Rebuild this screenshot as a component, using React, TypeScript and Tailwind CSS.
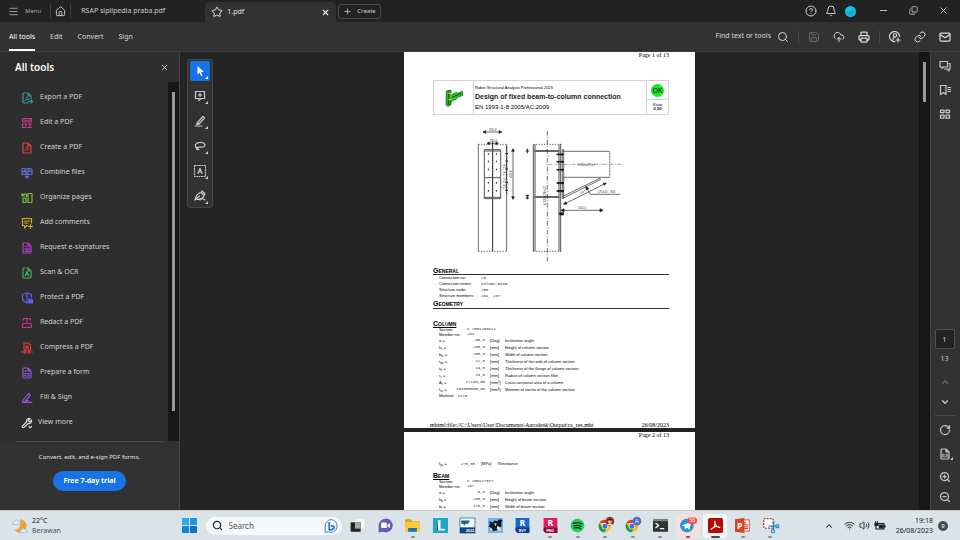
import type { ReactNode } from 'react'
import {
  Bell, ChevronDown, ChevronUp, CircleHelp, CloudUpload, House, Link, Mail, Menu, Minus,
  Plus, Printer, RotateCw, Save, Search, Star, X, ZoomIn, ZoomOut, Copy, Wifi, Volume2,
} from 'lucide-react'

interface IconProps {
  children: ReactNode
  className?: string
}

// 24 unit line icon, drawn in the current text colour
function Icon({ children, className = 'size-3' }: IconProps) {
  return (
    <svg
      viewBox="0 0 24 24"
      className={`shrink-0 ${className}`}
      fill="none"
      stroke="currentColor"
      strokeWidth="2.400"
      strokeLinecap="round"
      strokeLinejoin="round"
      aria-hidden="true"
    >
      {children}
    </svg>
  )
}

const pageOutline = <path d="M14 2H6a2 2 0 0 0-2 2v16a2 2 0 0 0 2 2h12a2 2 0 0 0 2-2V8zM14 2v6h6" />
const acrobatMark = <path d="M8 17c3-2 4-5 4-8 0 3 2 6 5 6-3-1-6 0-9 2z" strokeWidth="1.5" />

const tools = [
  {
    label: 'Export a PDF',
    color: 'text-[#2f969c]',
    icon: (
      <>
        <path d="M20 13V8l-6-6H6a2 2 0 0 0-2 2v16a2 2 0 0 0 2 2h8M14 2v6h6" />
        {acrobatMark}
        <path d="M14 19h8M20 16l3 3-3 3" />
      </>
    ),
  },
  {
    label: 'Edit a PDF',
    color: 'text-[#c4388f]',
    icon: (
      <>
        <rect x="3" y="3" width="18" height="7" rx="1" />
        <path d="M3 14h7v7H3zM14 14h7M17.500 14v7M14 21h7" />
        <path d="M6 6.500h12" />
      </>
    ),
  },
  {
    label: 'Create a PDF',
    color: 'text-[#d9423f]',
    icon: <>{pageOutline}{acrobatMark}</>,
  },
  {
    label: 'Combine files',
    color: 'text-[#6a69e0]',
    icon: (
      <>
        <path d="M10 15H2V3h8v12M14 15h8V6l-3-3h-5v12" />
        <path d="M5 11l2-5 1 4M17 6v3h3M12 12v10M9 19l3 3 3-3" />
      </>
    ),
  },
  {
    label: 'Organize pages',
    color: 'text-[#7bc03c]',
    icon: (
      <>
        <rect x="14" y="3" width="8" height="18" rx="1" />
        <path d="M10 12v9H4v-9zM2 3v5h5M2 8c2-4 5-5 9-4v5" />
      </>
    ),
  },
  {
    label: 'Add comments',
    color: 'text-[#d3aa1a]',
    icon: (
      <>
        <path d="M21 12V3H3v14h4v5l5-5h1M7 8h10M7 12h7M19 15v8M15 19h8" />
      </>
    ),
  },
  {
    label: 'Request e-signatures',
    color: 'text-[#b23ac6]',
    icon: <>{pageOutline}<path d="M8 9h3M8 13l3 3 3-4M8 19h9M16 12v5" /></>,
  },
  {
    label: 'Scan & OCR',
    color: 'text-[#43ad54]',
    icon: <>{pageOutline}<path d="M8.500 18l3.500-9 3.500 9M10 15h4" /></>,
  },
  {
    label: 'Protect a PDF',
    color: 'text-[#5f5fe6]',
    icon: (
      <>
        <path d="M21 10V5l-9-3-9 3v7c0 5 4 8 9 10M12 2v20" />
        <path d="M15 16h8v6h-8zM17 16v-2h4v2" fill="currentColor" />
      </>
    ),
  },
  {
    label: 'Redact a PDF',
    color: 'text-[#c4388f]',
    icon: (
      <>
        <path d="M5 6V3h14v3M12 3v8" />
        <rect x="3" y="13" width="18" height="8" rx="2" />
      </>
    ),
  },
  {
    label: 'Compress a PDF',
    color: 'text-[#df3d3d]',
    icon: (
      <>
        <path d="M14 2H6v14h13V6zM9.500 12l2.500-5 3 5zM1 20h22M8 17v6M16 17v6" />
      </>
    ),
  },
  {
    label: 'Prepare a form',
    color: 'text-[#8c57d2]',
    icon: <>{pageOutline}<path d="M8 8h3M8 13h8v5H8z" /></>,
  },
  {
    label: 'Fill & Sign',
    color: 'text-[#9153dc]',
    icon: <path d="M3 18L15 3l4 3L8 19l-5 2zM9 21c4-5 5-5 6-3s2 3 7 3H3" />,
  },
]

const quickTools = [
  { label: 'Select', icon: <path d="M7 2v17l4-4 3 7 3-1-3-7h6z" fill="currentColor" stroke="none" /> },
  { label: 'Comment', icon: <path d="M3 3h18v14h-7l-4 4v-4H3zM12 6.500v7M8.500 10h7" /> },
  { label: 'Highlight', icon: <path d="M7 15L18 3l3 3-11 12-5 1zM7 15l3 3M2 22h14" /> },
  { label: 'Draw', icon: <path d="M8 17C0 14 1 6 11 5s15 7 7 9c-5 1-9-1-12 1-3 3 1 5 4 4" /> },
  {
    label: 'Add text',
    icon: (
      <>
        <rect x="1" y="1" width="22" height="22" strokeDasharray="2 3" />
        <path d="M8 17l4-10 4 10M9.500 14h5" />
      </>
    ),
  },
  { label: 'Sign', icon: <path d="M2 20C3 12 7 7 14 5l6 6c-2 6-7 8-14 8M14 5l2-3 6 6-2 3M2 20l9-8M12 20c4-4 6-3 10 0" /> },
]

function TitleBar() {
  return (
    <header className="flex h-[22px] shrink-0 items-center bg-[#222222] text-[#cfcfcf]">
      <button className="flex h-full items-center gap-[6px] pl-2 text-[6px] text-[#a8a8a8]">
        <Menu className="size-[11px]" /> Menu
      </button>
      <div className="ml-[9px] flex h-[14px] w-[21px] items-center justify-center border-x border-[#444444]">
        <button aria-label="Home"><House className="size-[11px]" /></button>
      </div>
      <button className="ml-[10px] flex h-full w-[124px] items-center pt-px text-left text-[7px] text-[#c8c8c8]">RSAP sipilpedia praba.pdf</button>
      <div className="mt-[2px] flex h-5 w-[131px] items-center gap-1 rounded-t-sm bg-[#323232] px-[6px] text-[7px] text-[#e6e6e6]">
        <Star className="size-3" />
        <span className="flex-1">1.pdf</span>
        <button aria-label="Close tab"><X className="size-[9px]" strokeWidth={3} /></button>
      </div>
      <button className="ml-[2px] mt-px flex h-[15px] w-[43px] items-center gap-[5px] rounded-[3px] border border-[#4c4c4c] pl-1 text-[6px]">
        <Plus className="size-[9px]" /> Create
      </button>
      <div className="ml-auto flex items-center gap-2">
        <button aria-label="Help"><CircleHelp className="size-3" /></button>
        <button aria-label="Notifications"><Bell className="size-3" /></button>
        <button aria-label="Account" className="size-[11px] rounded-full bg-[#12c3ef]">
          <svg viewBox="0 0 11 11" className="size-[11px]" aria-hidden="true">
            <path d="M1 7 9 3q2 4-1 6-4 2-7-2z" fill="#25a3c9" />
          </svg>
        </button>
      </div>
      <div className="ml-[22px] flex items-center gap-5 pb-[2px] pr-[11px]">
        <button aria-label="Minimize"><Minus className="size-[11px]" /></button>
        <button aria-label="Restore"><Copy className="size-[9px] -scale-x-100 rotate-180" /></button>
        <button aria-label="Close"><X className="size-[11px]" /></button>
      </div>
    </header>
  )
}

function MenuBar() {
  return (
    <nav className="flex h-[30px] shrink-0 items-center border-b border-[#3d3d3d] bg-[#323232] text-[7px] text-[#d8d8d8]">
      <div className="flex h-full gap-[15px] pl-[9px]">
        <button className="border-b-2 border-white pt-[3px] text-white">All tools</button>
        <button className="pt-px">Edit</button>
        <button className="pt-px">Convert</button>
        <button className="pt-px">Sign</button>
      </div>
      <div className="ml-auto flex items-center pr-[9px]">
        <button className="flex items-center gap-[6px]">Find text or tools <Search className="size-3" /></button>
        <span className="mx-[9px] h-3 w-px bg-[#4a4a4a]" />
        <div className="flex items-center gap-[13px]">
          <button aria-label="Save" className="text-[#666666]"><Save className="size-3" /></button>
          <button aria-label="Upload"><CloudUpload className="size-3" /></button>
          <button aria-label="Print"><Printer className="size-3" strokeWidth={2.5} /></button>
        </div>
        <span className="mx-[9px] h-3 w-px bg-[#4a4a4a]" />
        <div className="flex items-center gap-[13px]">
          <button aria-label="Share with people">
            <Icon>
              <path d="M21 11a10 10 0 1 0-9 10M8 18v-3l3-3c-4-3-2-7 1-7s5 4 1 7M18 14v8M14 18h8" />
            </Icon>
          </button>
          <button aria-label="Copy link"><Link className="size-3" /></button>
          <button aria-label="Email"><Mail className="size-3" strokeWidth={2.5} /></button>
        </div>
      </div>
    </nav>
  )
}

function ToolsPanel() {
  return (
    <aside className="flex w-[180px] shrink-0 flex-col border-r border-[#454545] bg-[#323232] text-[#d2d2d2]">
      <div className="flex h-[30px] shrink-0 items-center justify-between bg-[#2e2e2e] pl-[15px] pr-[10px]">
        <h2 className="text-[10px] font-semibold text-white">All tools</h2>
        <button aria-label="Close panel"><X className="size-[9px]" strokeWidth={2.5} /></button>
      </div>
      <div className="flex h-[359px] shrink-0 bg-[#2e2e2e]">
        <div className="flex-1 pl-[21px] pt-[3px]">
          <ul className="text-[7px]">
            {tools.map((tool) => (
              <li key={tool.label}>
                <button className="flex h-[25px] items-center gap-[7px]">
                  <Icon className={`size-3 ${tool.color}`}>{tool.icon}</Icon>
                  {tool.label}
                </button>
              </li>
            ))}
            <li>
              <button className="flex h-[25px] items-center gap-[5px]">
                <Icon>
                  <path d="M3 18l8-8c-1-5 3-8 7-7l-4 4 3 3 4-4c1 5-2 8-7 7l-8 8c-2 1-5-1-3-3zM16 19l2.500 2.500L21 19" />
                </Icon>
                View more
              </button>
            </li>
          </ul>
        </div>
        <div className="flex w-[11px] justify-center bg-[#171717] pt-[10px]">
          <div className="h-[319px] w-[3px] bg-[#9a9a9a]" />
        </div>
      </div>
      <div className="flex flex-col items-center px-4">
        <hr className="w-full border-[#4b4b4b]" />
        <p className="mt-[11px] text-[6px] leading-[8px] text-[#e2e2e2]">Convert, edit, and e-sign PDF forms.</p>
        <button className="mt-[10px] h-5 rounded-full bg-[#1773e6] px-[10px] text-[7px] font-bold text-white">
          Free 7-day trial
        </button>
      </div>
    </aside>
  )
}

function QuickTools() {
  return (
    <div className="absolute left-[7px] top-[7px] flex w-[26px] flex-col items-center gap-[5px] rounded-[3px] border border-[#484848] bg-[#323232] py-px text-[#c8c8c8]">
      {quickTools.map((tool, i) => (
        <button
          key={tool.label}
          aria-label={tool.label}
          className={`relative flex size-5 items-center justify-center rounded-[2px] ${i === 0 ? 'bg-[#1672e8] text-white' : ''}`}
        >
          <Icon>{tool.icon}</Icon>
          <svg viewBox="0 0 4 4" className="absolute bottom-[2px] right-[2px] size-[3px]" aria-hidden="true">
            <path d="M4 0v4H0z" fill="currentColor" />
          </svg>
        </button>
      ))}
    </div>
  )
}

interface Param {
  symbol: string
  sub?: string
  value: string
  unit: string
  power?: string
  text: string
}

const columnParams: Param[] = [
  { symbol: 'α', value: '-90,0', unit: 'Deg', text: 'Inclination angle' },
  { symbol: 'h', sub: 'c', value: '250,0', unit: 'mm', text: 'Height of column section' },
  { symbol: 'b', sub: 'fc', value: '250,0', unit: 'mm', text: 'Width of column section' },
  { symbol: 't', sub: 'wc', value: '12,0', unit: 'mm', text: 'Thickness of the web of column section' },
  { symbol: 't', sub: 'fc', value: '19,0', unit: 'mm', text: 'Thickness of the flange of column section' },
  { symbol: 'r', sub: 'c', value: '13,0', unit: 'mm', text: 'Radius of column section fillet' },
  { symbol: 'A', sub: 'c', value: '17190,00', unit: 'mm', power: '2', text: 'Cross-sectional area of a column' },
  { symbol: 'I', sub: 'xc', value: '198000000,00', unit: 'mm', power: '4', text: 'Moment of inertia of the column section' },
]

const beamParams: Param[] = [
  { symbol: 'α', value: '0,0', unit: 'Deg', text: 'Inclination angle' },
  { symbol: 'h', sub: 'b', value: '250,0', unit: 'mm', text: 'Height of beam section' },
  { symbol: 'b', sub: 'f', value: '175,0', unit: 'mm', text: 'Width of beam section' },
]

const generalRows = [
  ['Connection no.:', '25'],
  ['Connection name:', 'Column-Beam'],
  ['Structure node:', '200'],
  ['Structure members:', '264, 167'],
]

const mono = "font-['Liberation_Mono',monospace] text-[#333333]"

function ParamTable({ rows }: { rows: Param[] }) {
  return (
    <table className="ml-[6px]">
      <tbody>
        {rows.map((row) => (
          <tr key={row.text} className="h-[7px] whitespace-nowrap leading-[7px]">
            <td className="w-[10px] p-0">
              {row.symbol}
              {row.sub && <sub className="text-[3px]">{row.sub}</sub>} =
            </td>
            <td className={`w-9 p-0 text-right ${mono}`}>{row.value}</td>
            <td className="w-5 p-0 pl-[5px]">
              [{row.unit}
              {row.power && <sup className="text-[3px]">{row.power}</sup>}]
            </td>
            <td className="p-0">{row.text}</td>
          </tr>
        ))}
      </tbody>
    </table>
  )
}

function MemberRows({ section, member }: { section: string; member: string }) {
  return (
    <dl className="ml-[6px] grid grid-cols-[28px_1fr] leading-[5px]">
      <dt>Section:</dt>
      <dd className={mono}>{section}</dd>
      <dt>Member no.:</dt>
      <dd className={mono}>{member}</dd>
    </dl>
  )
}

// Two elevations of the joint: end plate on the left, column with haunched beam on the right
function JointDrawing() {
  const bolts = [103, 125, 149, 189, 213]
  return (
    <svg viewBox="0 0 495 435" className="ml-8 h-[145px] w-[165px]" stroke="#222" strokeWidth="2" fill="none" role="img" aria-label="Connection drawing">
      {/* end plate view */}
      <path d="M40 73v321M125 73v321" />
      <path d="M40 73h85M40 394h85" strokeDasharray="4 4" />
      <path d="M83 65v329" strokeWidth="3" />
      <path d="M58 89h49v147H58zM58 93h49M58 173h49M58 232h49" stroke="#555" strokeWidth="3" />
      {bolts.map((y) => (
        <path key={y} d={`M70 ${y - 3}v5M94 ${y - 3}v5M121 ${y - 2}h8`} strokeWidth="3" />
      ))}
      <path d="M54 36h56M68 70h30M144 88v148M125 78v146" />
      <path d="M54 36l8-4v8zM110 36l-8-4v8zM66 70l7-4v8zM100 70l-7-4v8zM144 86l-4 8h8zM144 238l-4-8h8z" fill="#111" />

      {/* column */}
      <path d="M205 73v321M210 73v321M282 73v321M287 73v321" strokeWidth="3" stroke="#555" />
      <path d="M205 73h84M205 394h84" strokeDasharray="4 4" />
      <path d="M208 93h75M208 231h75" stroke="#666" strokeWidth="6" />
      <path d="M247 33v397" strokeDasharray="14 5 3 5" />

      {/* beam and haunch */}
      <path d="M292 89h4v146h-4z" />
      <path d="M294 94h140M294 172h140M434 94v78" />
      <path d="M434 94v78" stroke="#fff" strokeDasharray="4 5" />
      <path d="M294 229l112-55M296 234l112-56" />
      <path d="M250 133h224" strokeDasharray="12 4 3 4" stroke="#777" />
      {bolts.map((y) => (
        <path key={y} d={`M275 ${y}h22M280 ${y - 3}v7M291 ${y - 3}v7`} strokeWidth="4" stroke="#111" />
      ))}
      <path d="M281 282h16M288 271h126M298 252l124-62M364 202l12 21h90" />
      <path d="M288 271l9-5v10zM414 271l-9-5v10zM296 253l10-1-5-7zM424 189l-6 7-4-6zM362 199l2 11 7-4zM284 278h12v7h-12z" fill="#111" />
      <path d="M187 86v14M182 93h10M187 224v14M182 227h10M182 234h10" strokeWidth="3" />
      <g fill="#333" stroke="none" className="font-['Liberation_Sans',sans-serif] text-[9px]">
        <text x="72" y="32">250,0</text>
        <text x="74" y="65">130,0</text>
        <text x="340" y="267">300,0</text>
        <text x="338" y="138">K 250x175x7</text>
        <text x="398" y="219">175x10 - 306</text>
        <text transform="translate(140 173) rotate(-90)">420,0</text>
        <text transform="translate(122 210) rotate(-90)">75,0 75,0 75,0 75,0</text>
        <text transform="translate(243 256) rotate(-90)">K 250x250x12</text>
        <text transform="translate(348 222) rotate(-27)">337</text>
      </g>
    </svg>
  )
}

const sectionHead = 'text-[7px] font-bold [font-variant:small-caps]'
const serifLine = "text-[6px] leading-[6px] font-['Liberation_Serif',serif]"

function PageOne() {
  return (
    <article className="flex h-[376px] w-[291px] shrink-0 flex-col bg-white px-[26px] text-[4px] text-black font-['Liberation_Sans',sans-serif]">
      <p className={`text-right ${serifLine}`}>Page 1 of 13</p>
      <div className="flex-1 pl-[3px]">
        <div className="mt-[22px] flex h-[35px] border border-[#d4d4d4]">
          <div className="flex w-10 items-center justify-center border-r border-[#d4d4d4]">
            <svg viewBox="0 0 54 54" className="size-[18px]" aria-hidden="true">
              <path d="M4 6l14-3v44l-10 5-5-5z" fill="#17b42b" stroke="#124d17" strokeWidth="2" />
              <path d="M18 18l16-8 4 3 14-6 2 12-14 5-8 8-8 2-6 5z" fill="#1fca35" stroke="#124d17" strokeWidth="2" />
              <path d="M18 26l30-12M11 5v44" stroke="#0b5c18" strokeWidth="3" />
              <path d="M8 13h12M8 32h12M18 12v22" stroke="#d9d72b" strokeWidth="3" />
            </svg>
          </div>
          <div className="flex-1 pl-px pt-1">
            <p className="text-[4px] leading-[6px]">Robot Structural Analysis Professional 2023</p>
            <h1 className="text-[7px] font-bold leading-[12px] text-[#222222]">Design of fixed beam-to-column connection</h1>
            <p className="text-[6px] leading-[9px]">EN 1993-1-8:2005/AC:2009</p>
          </div>
          <div className="w-[22px] border-l border-[#d4d4d4] text-center">
            <div className="flex h-[19px] items-center justify-center border-b border-[#d4d4d4]">
              <span className="size-[13px] rounded-full bg-[#19e629] text-[7px] leading-[13px]">OK</span>
            </div>
            <p className="pt-[2px] leading-[5px]">Ratio</p>
            <p className="font-bold leading-[4px]">0,50</p>
          </div>
        </div>
        <div className="mt-[5px]">
          <JointDrawing />
        </div>
        <h2 className={`mt-[2px] border-b border-[#333333] leading-[7px] ${sectionHead}`}>General</h2>
        <dl className="ml-[6px] grid grid-cols-[42px_1fr] leading-[6px]">
          {generalRows.map(([name, value]) => (
            <div key={name} className="contents">
              <dt>{name}</dt>
              <dd className={mono}>{value}</dd>
            </div>
          ))}
        </dl>
        <h2 className={`mt-px border-b border-[#333333] leading-[8px] ${sectionHead}`}>Geometry</h2>
        <h3 className={`mt-3 leading-[6px] underline ${sectionHead}`}>Column</h3>
        <MemberRows section="K 250x250x12" member="264" />
        <ParamTable rows={columnParams} />
        <p className="ml-[6px] leading-[5px]">
          Material: <span className={`ml-[2px] ${mono}`}>S275</span>
        </p>
      </div>
      <footer className={`flex justify-between ${serifLine}`}>
        <span>mhtml:file://C:\Users\User\Documents\Autodesk\Output\ra_res.mht</span>
        <span>26/08/2023</span>
      </footer>
    </article>
  )
}

function PageTwo() {
  return (
    <article className="h-[376px] w-[291px] shrink-0 bg-white px-[26px] text-[4px] text-black font-['Liberation_Sans',sans-serif]">
      <p className={`text-right ${serifLine}`}>Page 2 of 13</p>
      <div className="pl-[3px] pt-[22px]">
        <p className="ml-[6px] flex leading-[8px]">
          <span className="w-[15px]">f<sub className="text-[3px]">yc</sub> =</span>
          <span className={`w-[21px] text-right ${mono}`}>275,00</span>
          <span className="w-[23px] pl-[6px]">[MPa]</span>
          <span>Resistance</span>
        </p>
        <h3 className={`mt-[5px] leading-[6px] underline ${sectionHead}`}>Beam</h3>
        <MemberRows section="K 250x175x7" member="167" />
        <ParamTable rows={beamParams} />
      </div>
    </article>
  )
}

function PageRail() {
  return (
    <aside className="flex w-[30px] shrink-0 flex-col items-center border-l border-[#454545] bg-[#323232] pr-[2px] text-[#c8c8c8]">
      <div className="mt-2 flex flex-col gap-3">
        <button aria-label="Comments">
          <Icon><path d="M2 3h15v11H9l-3 3v-3H2zM20 7h2v11h-2v4l-4-4h-5" /></Icon>
        </button>
        <button aria-label="Bookmarks">
          <Icon><path d="M3 3h11v18l-5-4-6 4zM18 7h5M18 11h5M18 15h5" /></Icon>
        </button>
        <button aria-label="Page thumbnails">
          <Icon><path d="M3 4h7v5H3zM14 4h7v5h-7zM3 14h7v6H3zM14 14h7v6h-7z" strokeWidth="2.500" /></Icon>
        </button>
      </div>
      <div className="mt-auto flex flex-col items-center pb-[7px]">
        <input
          aria-label="Page number"
          defaultValue="1"
          className="size-5 rounded-[2px] border border-[#515151] bg-[#222222] text-center text-[7px] text-[#dddddd]"
        />
        <span className="mt-[5px] text-[7px] leading-[10px]">13</span>
        <button aria-label="Previous page" className="mt-[13px] text-[#6c6c6c]"><ChevronUp className="size-[10px]" strokeWidth={3} /></button>
        <button aria-label="Next page" className="mt-[10px]"><ChevronDown className="size-[10px]" strokeWidth={3} /></button>
        <hr className="mt-2 w-5 border-[#4b4b4b]" />
        <button aria-label="Rotate" className="mt-2"><RotateCw className="size-3" strokeWidth={2.5} /></button>
        <button aria-label="Page display" className="relative mt-3">
          <Icon>{pageOutline}<path d="M8 12v6M16 12v6M12 13v1M12 17v1" /></Icon>
          <svg viewBox="0 0 4 4" className="absolute -right-[2px] bottom-0 size-[3px]" aria-hidden="true">
            <path d="M4 0v4H0z" fill="currentColor" />
          </svg>
        </button>
        <button aria-label="Zoom in" className="mt-[11px]"><ZoomIn className="size-3" strokeWidth={2.5} /></button>
        <button aria-label="Zoom out" className="mt-2"><ZoomOut className="size-3" strokeWidth={2.5} /></button>
      </div>
    </aside>
  )
}

function ChromeLogo({ badge }: { badge: ReactNode }) {
  return (
    <>
      <circle cx="11" cy="13" r="10" fill="#fbc116" />
      <path d="M2.300 8A10 10 0 0 1 19.700 8H11z" fill="#e33b2e" />
      <path d="M2.300 8A10 10 0 0 0 10 23l5-8H7z" fill="#229a4b" />
      <circle cx="11" cy="13" r="5" fill="#fff" />
      <circle cx="11" cy="13" r="4" fill="#3478e5" />
      {badge}
    </>
  )
}

interface TaskApp {
  name: string
  state?: 'running' | 'active' | 'alert'
  icon: ReactNode
}

const label = "font-['Noto_Sans',sans-serif] font-bold"

const apps: TaskApp[] = [
  {
    name: 'Task view',
    icon: (
      <>
        <rect x="8" y="2" width="15" height="15" fill="#f7f8f8" />
        <rect x="1" y="7" width="16" height="15" fill="#222" />
        <rect x="8" y="7" width="9" height="10" fill="#aaa" />
      </>
    ),
  },
  {
    name: 'Chat',
    icon: (
      <>
        <path d="M12 1a11 11 0 1 1-4 21l-7 1V12A11 11 0 0 1 12 1z" fill="#6659b8" />
        <rect x="5" y="7" width="9" height="9" rx="1" fill="#fff" />
        <path d="M15 11l4-3v8l-4-3z" fill="#fff" />
      </>
    ),
  },
  {
    name: 'File Explorer',
    state: 'running',
    icon: (
      <>
        <path d="M0 2h9l3 3h12v7H0z" fill="#e49b1b" />
        <rect x="0" y="6" width="24" height="16" rx="1" fill="#fcc93f" />
        <path d="M5 16h14v6H5z" fill="#1872bd" />
      </>
    ),
  },
  {
    name: 'L',
    icon: (
      <>
        <rect width="24" height="24" fill="#21a5cb" />
        <path d="M8 4l4-1v14h7v3H7z" fill="#fff" />
        <path d="M8 4v16H6z" fill="#134a6b" />
      </>
    ),
  },
  {
    name: 'Structural 2022',
    icon: (
      <>
        <rect width="24" height="24" fill="#f1f6fa" stroke="#0b4a78" strokeWidth="1" />
        <path d="M0 15h24v9H0z" fill="#0b4a78" />
        <path d="M2 4h14l-3 5H9l-2 3-2-3H2z" fill="#19628f" />
        <text x="9" y="22" fill="#fff" className={`${label} text-[6px]`}>2022</text>
      </>
    ),
  },
  {
    name: 'Drawing editor',
    icon: (
      <>
        <rect width="24" height="24" fill="#6eb8ea" />
        <path d="M2 5l6 2 2-3 5 1 3-3 5 1-2 6 1 4-5 2-3 5-6 1-2-5-5-2 2-4z" fill="#131a20" />
        <path d="M10 8l4 1-2 4zM15 12l6 5-2 4-5-4zM4 16l3 3-3 1z" fill="#e6edf0" />
      </>
    ),
  },
  {
    name: 'Revit',
    icon: (
      <>
        <path d="M1 0h22v23H4l-3-3z" fill="#1565d8" />
        <path d="M1 15h22v9H4l-3-3z" fill="#0a3c8c" />
        <text x="7" y="12" fill="#fff" className={`${label} text-[14px]`}>R</text>
        <text x="6" y="22" fill="#fff" className={`${label} text-[6px]`}>RVT</text>
      </>
    ),
  },
  {
    name: 'Robot Structural Analysis',
    state: 'running',
    icon: (
      <>
        <path d="M1 0h22v23H4l-3-3z" fill="#e31b5f" />
        <path d="M1 15h22v9H4l-3-3z" fill="#8d0b37" />
        <text x="7" y="12" fill="#fff" className={`${label} text-[14px]`}>R</text>
        <text x="5" y="22" fill="#fff" className={`${label} text-[6px]`}>PRO</text>
      </>
    ),
  },
  {
    name: 'Spotify',
    state: 'running',
    icon: (
      <>
        <circle cx="12" cy="12" r="11" fill="#1ed35e" />
        <path d="M5 8.500q8-2.500 14 1M6 12.500q7-2 12 1M7 16q6-1.500 10 1" stroke="#10291a" strokeWidth="2" fill="none" strokeLinecap="round" />
      </>
    ),
  },
  {
    name: 'Chrome',
    state: 'running',
    icon: (
      <ChromeLogo
        badge={
          <>
            <circle cx="19" cy="5" r="7" fill="#a13127" />
            <circle cx="19" cy="5" r="3" fill="#efc7a8" />
            <path d="M15 4q4-6 8 0z" fill="#21130f" />
            <path d="M15 11q4-5 8 0z" fill="#fff" />
          </>
        }
      />
    ),
  },
  {
    name: 'Chrome A',
    state: 'running',
    icon: (
      <ChromeLogo
        badge={
          <>
            <circle cx="19" cy="5" r="7" fill="#5c6bc0" />
            <text x="16" y="8.500" fill="#fff" className="font-['Noto_Sans',sans-serif] text-[9px]">A</text>
          </>
        }
      />
    ),
  },
  {
    name: 'Terminal',
    state: 'running',
    icon: (
      <>
        <rect x="0" y="2" width="24" height="20" rx="1" fill="#333" />
        <path d="M0 2h24v3H0z" fill="#888" />
        <path d="M4 8l5 4-5 4M11 17h7" stroke="#fff" strokeWidth="2" fill="none" />
      </>
    ),
  },
  {
    name: 'Telegram',
    state: 'alert',
    icon: (
      <>
        <circle cx="11" cy="12" r="11" fill="#2797d4" />
        <path d="M3 12l15-6-3 13-4-4-3 3-1-5z" fill="#fff" />
        <rect x="12" y="-1" width="15" height="10" rx="4" fill="#ec4c43" />
        <text x="15" y="7" fill="#fff" className="font-['Noto_Sans',sans-serif] text-[8px]">56</text>
      </>
    ),
  },
  {
    name: 'Acrobat',
    state: 'active',
    icon: (
      <>
        <rect width="24" height="24" rx="3" fill="#b30b00" />
        <path d="M5 18c4-2 7-7 6-13 0 6 4 11 8 10-4-2-10-1-14 3z" stroke="#fff" strokeWidth="1.700" fill="none" strokeLinejoin="round" />
      </>
    ),
  },
  {
    name: 'PowerPoint',
    state: 'running',
    icon: (
      <>
        <path d="M12 3h11v18H12z" fill="#fff" stroke="#d35230" strokeWidth="1.500" />
        <path d="M16 6v5h5M14 14h7M14 17h7" stroke="#d35230" strokeWidth="2" fill="none" />
        <path d="M0 2l15-2v24L0 22z" fill="#d24625" />
        <text x="3" y="17" fill="#fff" className={`${label} text-[14px]`}>P</text>
      </>
    ),
  },
  {
    name: 'Snipping Tool',
    state: 'running',
    icon: (
      <>
        <path d="M1 1h15v15H1z" fill="#fff" stroke="#ad3d32" strokeWidth="2" strokeDasharray="3 2" />
        <path d="M17 5v14M9 13h14" stroke="#2882bb" strokeWidth="2" />
        <circle cx="23" cy="13" r="2.500" fill="none" stroke="#2495da" strokeWidth="2" />
        <circle cx="16" cy="21" r="2.500" fill="none" stroke="#2495da" strokeWidth="2" />
      </>
    ),
  },
]

function AppButton({ app }: { app: TaskApp }) {
  const tile = app.state === 'active' ? 'bg-[#f1f5f6]' : app.state === 'alert' ? 'bg-[#f8dfdf]' : ''
  const mark = app.state === 'active' ? 'w-[9px] bg-[#454545]' : app.state === 'alert' ? 'w-1 bg-[#c93a2e]' : 'w-1 bg-[#8a9194]'
  return (
    <button aria-label={app.name} className={`relative flex h-6 w-6 items-center justify-center rounded-[2px] ${tile}`}>
      <svg viewBox="0 0 24 24" className="size-[15px] overflow-visible" aria-hidden="true">{app.icon}</svg>
      {app.state && <span className={`absolute bottom-0 h-[2px] rounded-full ${mark}`} />}
    </button>
  )
}

function Taskbar() {
  return (
    <footer className="flex h-[30px] shrink-0 items-center border-t border-[#c3cccf] bg-[#d9e3e8] text-[7px] text-[#222222]">
      <div className="flex flex-1 items-center gap-1 pl-3">
        <svg viewBox="0 0 48 48" className="size-4" aria-hidden="true">
          <path d="M24 4a20 20 0 1 1-17 31c15 2 21-12 17-31z" fill="#f0a02f" />
          <path d="M2 19q-2-8 6-9 5-8 11 0 8 1 6 9z" fill="#e5edfa" stroke="#92aedd" strokeWidth="2" />
          <path d="M24 43q-2-7 5-8 5-7 10 0 8 1 6 8z" fill="#e5edfa" stroke="#92aedd" strokeWidth="2" />
        </svg>
        <p className="leading-[10px]">
          22°C
          <br />
          <span className="text-[#555555]">Berawan</span>
        </p>
      </div>
      <div className="flex items-center pl-1">
        <button aria-label="Start" className="grid size-[15px] grid-cols-2 gap-px">
          <span className="bg-[#2fa9ee]" />
          <span className="bg-[#1d96e4]" />
          <span className="bg-[#1284d8]" />
          <span className="bg-[#0a6fc8]" />
        </button>
        <label className="ml-[9px] flex h-[18px] w-[136px] items-center gap-[6px] rounded-full bg-[#f5f8fa] px-[6px]">
          <Search className="size-[11px] shrink-0" strokeWidth={2.5} />
          <input aria-label="Search" placeholder="Search" className="w-0 flex-1 text-[8px] outline-none placeholder:text-[#555555]" />
          <svg viewBox="0 0 24 24" className="-mr-[2px] size-[14px]" fill="none" stroke="#2872d8" strokeWidth="1.500" aria-hidden="true">
            <path d="M12 1a11 11 0 1 1-5 21l-5 1V12A11 11 0 0 1 12 1z" />
            <path d="M9 5v13l3 1 5-3v-3l-5-2" strokeWidth="3" />
          </svg>
        </label>
        <div className="ml-1 flex w-[437px] justify-between">
          {apps.map((app) => <AppButton key={app.name} app={app} />)}
        </div>
      </div>
      <div className="flex flex-1 items-center justify-end pr-3">
        <button aria-label="Hidden icons"><ChevronUp className="size-[10px]" strokeWidth={2.5} /></button>
        <div className="ml-[10px] flex items-center gap-1">
          <Wifi className="size-[11px]" />
          <Volume2 className="size-[11px]" />
          <Icon>
            <path d="M6 7h14v11H4v-6M22 11v3" />
            <path d="M11 10h7v6h-7zM3 3v4M7 3v4M2 7h6v4H2z" fill="currentColor" />
          </Icon>
        </div>
        <time className="ml-[10px] text-right leading-[10px]">
          19:18
          <br />
          26/08/2023
        </time>
        <span className="ml-[5px] size-[10px] rounded-full bg-[#4a4a4a] text-center text-[6px] leading-[10px] text-white">9</span>
      </div>
    </footer>
  )
}

export default function App() {
  return (
    <div className="flex h-screen flex-col overflow-hidden bg-[#242424] font-['Noto_Sans',sans-serif]">
      <TitleBar />
      <MenuBar />
      <div className="flex min-h-0 flex-1">
        <ToolsPanel />
        <main className="relative flex min-w-0 flex-1 overflow-hidden">
          <QuickTools />
          <div className="flex flex-1 flex-col items-center gap-1">
            <PageOne />
            <PageTwo />
          </div>
          <div className="flex w-[11px] justify-center bg-[#171717] pt-[10px]">
            <div className="h-10 w-[3px] bg-[#9a9a9a]" />
          </div>
        </main>
        <PageRail />
      </div>
      <Taskbar />
    </div>
  )
}
